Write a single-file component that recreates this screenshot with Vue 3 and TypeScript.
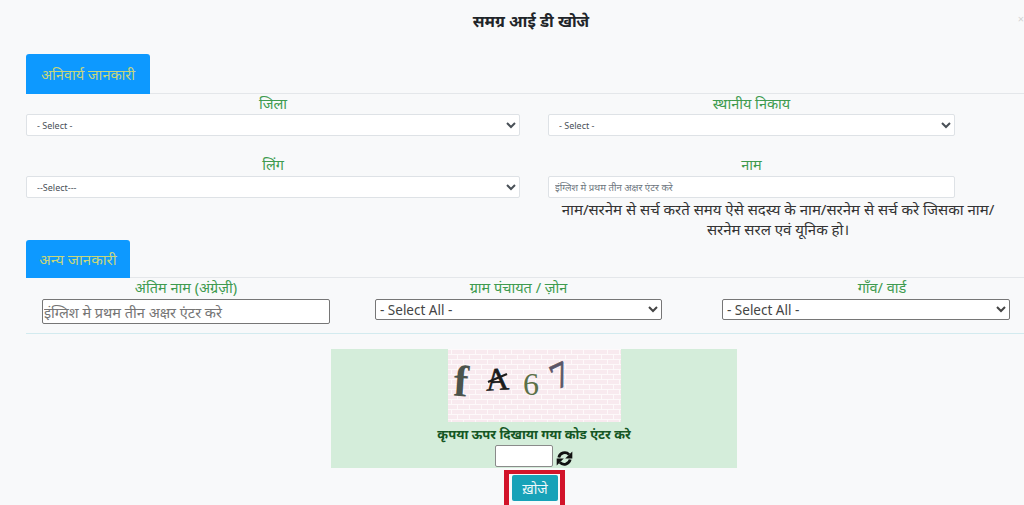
<script setup lang="ts">
const pageTitle: string = 'समग्र आई डी खोजे'
</script>

<template>
  <div class="page">
    <header class="head">
      <h1 class="title">{{ pageTitle }}</h1>
      <span class="close">×</span>
    </header>

    <div class="tabbar"><div class="tab tab-a">अनिवार्य जानकारी</div></div>
    <div class="grid-two">
      <div>
        <label class="lab">जिला</label>
        <select class="ctl"><option>- Select -</option></select>
      </div>
      <div>
        <label class="lab">स्थानीय निकाय</label>
        <select class="ctl"><option>- Select -</option></select>
      </div>
      <div>
        <label class="lab lab-tight">लिंग</label>
        <select class="ctl"><option>--Select---</option></select>
      </div>
      <div>
        <label class="lab lab-tight">नाम</label>
        <input class="ctl inp" placeholder="इंग्लिश मे प्रथम तीन अक्षर एंटर करे" />
        <p class="note">नाम/सरनेम से सर्च करते समय ऐसे सदस्य के नाम/सरनेम से सर्च करे जिसका नाम/<br />सरनेम सरल एवं यूनिक हो।</p>
      </div>
    </div>

    <div class="tabbar second"><div class="tab tab-b">अन्य जानकारी</div></div>
    <div class="row-three">
      <div class="c3">
        <label class="lab lab-tight">अंतिम नाम (अंग्रेज़ी)</label>
        <input class="native native-input" placeholder="इंग्लिश मे प्रथम तीन अक्षर एंटर करे" />
      </div>
      <div class="c3 c3-mid">
        <label class="lab lab-tight">ग्राम पंचायत / ज़ोन</label>
        <select class="native"><option>- Select All -</option></select>
      </div>
      <div class="c3 c3-last">
        <label class="lab lab-tight lab-shift">गाँव/ वार्ड</label>
        <select class="native"><option>- Select All -</option></select>
      </div>
    </div>
    <hr class="rule" />

    <div class="captcha">
      <svg class="cap-img" viewBox="0 0 173 73" width="173" height="73">
        <defs>
          <pattern id="brick" width="12" height="10" patternUnits="userSpaceOnUse">
            <rect width="12" height="10" fill="#f8eaef" />
            <path d="M0 .5H12M0 5.5H12M3.5 0V5M9.5 5V10" stroke="#fdf9fa" stroke-width="1" fill="none" />
          </pattern>
        </defs>
        <rect width="173" height="73" fill="url(#brick)" />
        <text x="13" y="47" class="g g1" transform="rotate(4 13 32)">f</text>
        <text x="49" y="41" class="g g2" transform="rotate(-4 49 30)">A</text>
        <path d="M40 33L59 25" stroke="#1c1c1c" stroke-width="2.4" />
        <text x="83" y="46" class="g g3">6</text>
        <text x="112" y="38" class="g g4" transform="rotate(-25 112 26)">7</text>
      </svg>
      <div class="cap-text">कृपया ऊपर दिखाया गया कोड एंटर करे</div>
      <div class="cap-row">
        <input class="cap-input" />
        <svg class="refresh" viewBox="0 0 24 24" width="17" height="17">
          <path d="M4 10.5A8.5 8.5 0 0 1 18.5 6.5" stroke="#111" stroke-width="4" fill="none" />
          <path d="M23 2v10h-10z" fill="#111" />
          <path d="M20 13.5A8.5 8.5 0 0 1 5.5 17.5" stroke="#111" stroke-width="4" fill="none" />
          <path d="M1 22v-10h10z" fill="#111" />
        </svg>
      </div>
    </div>

    <div class="btn-wrap">
      <span class="btn-mark"><button class="btn">ख़ोजे</button></span>
    </div>
  </div>
</template>

<style>
html, body { margin: 0; background: #f8f9fa; }
</style>

<style scoped>
.page {
  width: 1024px;
  height: 505px;
  overflow: hidden;
  background: #f8f9fa;
  font-family: "Noto Sans", "Liberation Sans", sans-serif;
  color: #212529;
}
.head { height: 54px; position: relative; overflow: hidden; }
.title {
  margin: 0;
  padding-top: 10px;
  padding-left: 38px;
  text-align: center;
  font-size: 16px;
  line-height: 22px;
  font-weight: 700;
  color: #212529;
}
.close {
  position: absolute;
  right: 0;
  top: 10px;
  font-size: 11px;
  line-height: 18px;
  color: #d4d4d4;
}
.tabbar {
  margin-left: 26px;
  border-bottom: 1px solid #e4e7ea;
  display: flex;
}
.tab {
  background: #0d99ff;
  color: #c6d67c;
  border-radius: 3px 3px 0 0;
  display: flex;
  align-items: center;
  justify-content: center;
  font-size: 14.5px;
  margin-bottom: -1px;
}
.tab-a { width: 124px; height: 40px; }
.tab-b { width: 104px; height: 38px; font-size: 15px; }
.second { margin-top: 1px; }
.grid-two {
  display: grid;
  grid-template-columns: 494px 407px;
  column-gap: 28px;
  row-gap: 20px;
  padding-left: 26px;
  align-items: start;
}
.lab {
  display: block;
  text-align: center;
  color: #3e9b4f;
  font-size: 14.5px;
  line-height: 18px;
  margin-bottom: 2px;
}
.lab-tight { line-height: 16px; margin-bottom: 4px; }
.ctl {
  display: block;
  width: 100%;
  height: 22px;
  box-sizing: border-box;
  border: 1px solid #dee2e6;
  border-radius: 2px;
  background: #fff;
  font-family: "Noto Sans", sans-serif;
  font-size: 9px;
  color: #495057;
  padding: 0 6px;
}
.inp { font-size: 9.6px; }
.inp::placeholder { color: #6c757d; }
.note {
  margin: 0;
  width: 460px;
  text-align: center;
  font-size: 15px;
  line-height: 20px;
  color: #333;
  padding-top: 1px;
}
.row-three {
  display: flex;
  padding: 1px 0 0 42px;
}
.c3 { width: 288px; flex: none; }
.c3-mid { margin-left: 45px; width: 287px; }
.c3-last { margin-left: 60px; }
.lab-shift { padding-left: 32px; }
.native {
  display: block;
  width: 100%;
  height: 21px;
  box-sizing: border-box;
  border: 1px solid #767676;
  border-radius: 2px;
  background: #fff;
  font-family: "Noto Sans", sans-serif;
  font-size: 13.5px;
  padding: 0;
  color: #444;
}
.native-input {
  height: 25px;
  font-size: 14.5px;
  padding: 0 1px;
}
.native-input::placeholder { color: #757575; }
.rule {
  margin: 9px 0 0 26px;
  border: 0;
  border-top: 1px solid #d3ebef;
}
.captcha {
  width: 406px;
  height: 119px;
  margin: 15px 0 0 331px;
  background: #d4edda;
  display: flex;
  flex-direction: column;
  align-items: center;
}
.cap-img { display: block; flex: none; }
.g { text-anchor: middle; }
.g1 { font: 700 44px "Liberation Serif", serif; fill: #4c544c; }
.g2 { font: 400 32px "Liberation Serif", serif; fill: #1c1c1c; stroke: #1c1c1c; stroke-width: 0.6px; }
.g3 { font: 400 32px "Liberation Serif", serif; fill: #5b7048; }
.g4 { font: 400 36px "Liberation Serif", serif; fill: #5a5566; stroke: #5a5566; stroke-width: 0.7px; }
.cap-text {
  font-size: 13px;
  font-weight: 700;
  color: #155724;
  line-height: 18px;
  margin-top: 3px;
}
.cap-row {
  display: flex;
  align-items: flex-end;
  margin-top: 2px;
  gap: 3px;
}
.cap-input {
  width: 58px;
  height: 22px;
  box-sizing: border-box;
  border: 1px solid #8a8a8a;
  border-radius: 2px;
  background: #fff;
  padding: 0;
}
.refresh { display: block; flex: none; }
.btn-wrap { display: flex; justify-content: center; padding-left: 45px; margin-top: 2px; }
.btn-mark {
  display: block;
  width: 61px;
  height: 40px;
  box-sizing: border-box;
  border: 4px solid #d2142a;
  border-left-width: 5px;
  border-right-width: 5px;
  padding: 1px 0 0 3px;
}
.btn {
  display: block;
  width: 46px;
  height: 26px;
  border: 0;
  border-radius: 2px;
  background: #17a2b8;
  color: #eef8fa;
  font-family: "Noto Sans", sans-serif;
  font-size: 14px;
  padding: 0;
}
</style>
